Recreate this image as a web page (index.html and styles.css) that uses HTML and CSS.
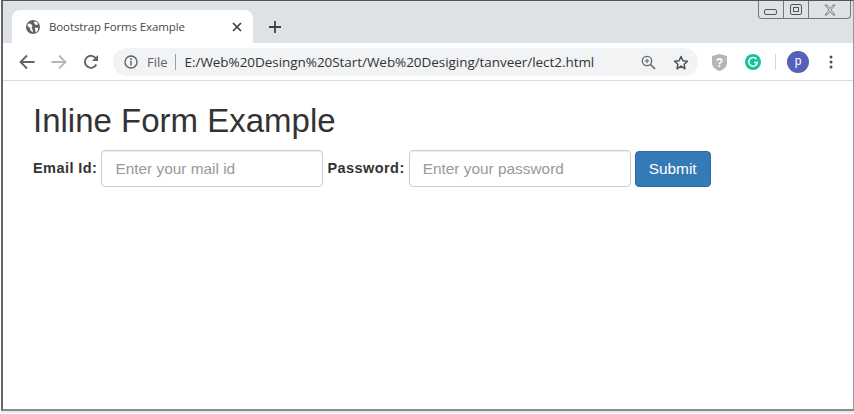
FILE: index.html
```html
<!DOCTYPE html>
<html lang="en">
<head>
<meta charset="utf-8">
<title>Bootstrap Forms Example</title>
<link rel="stylesheet" href="styles.css">
</head>
<body>
<div class="window">
  <div class="winctl">
    <div class="winbtn min"><svg width="18" height="16" viewBox="0 0 18 16"><rect x="2.5" y="7.5" width="12" height="5" rx="1.5" fill="none" stroke="#555"/></svg></div>
    <div class="winbtn max"><svg width="14" height="16" viewBox="0 0 14 16"><rect x="1.5" y="2.5" width="11" height="10" rx="1.5" fill="none" stroke="#555"/><rect x="4.5" y="5.5" width="5" height="4" fill="none" stroke="#555"/></svg></div>
    <div class="winbtn cls"><svg width="14" height="14" viewBox="0 0 14 14"><path d="M2 2h2l3 3.500 3-3.500h2l-4 5 4 5h-2l-3-3.500-3 3.500h-2l4-5z" fill="none" stroke="#666" stroke-width=".8"/></svg></div>
  </div>
  <header class="tabstrip">
    <div class="tab">
      <svg class="globe" width="14" height="14" viewBox="0 0 14 14"><circle cx="7" cy="7" r="7" fill="#5f6368"/><path d="M2 3.500l3 .5 1.500 2-1 1.500 1 2 .5 3-2.500-2-.5-2.500-2.500-2zM8 1.500l3 .5 1 2.500-2 .5-1.500-1zM9 7.500l3.500.5-1 3-2 1.500z" fill="#fff"/></svg>
      <span class="tabtitle">Bootstrap Forms Example</span>
      <svg class="tabx" width="10" height="10" viewBox="0 0 10 10"><path d="M1 1l8 8M9 1l-8 8" stroke="#3c4043" stroke-width="1.700"/></svg>
    </div>
    <svg class="newtab" width="12" height="12" viewBox="0 0 12 12"><path d="M6 0v12M0 6h12" stroke="#3c4043" stroke-width="1.800"/></svg>
  </header>
  <nav class="toolbar">
    <svg class="navbtn" width="16" height="16" viewBox="0 0 16 16"><path d="M15.500 8H2M8 1.500L1.500 8 8 14.500" fill="none" stroke="#5f6368" stroke-width="1.800"/></svg>
    <svg class="navbtn" width="16" height="16" viewBox="0 0 16 16"><path d="M.5 8H14M8 1.500L14.500 8 8 14.500" fill="none" stroke="#b4b7bb" stroke-width="1.800"/></svg>
    <svg class="navbtn" width="16" height="16" viewBox="0 0 16 16"><path d="M13.300 10.500A6 6 0 1 1 13 4.600" fill="none" stroke="#5f6368" stroke-width="1.900"/><path d="M15 1v6H9z" fill="#5f6368"/></svg>
    <div class="omnibox">
      <svg class="info" width="14" height="14" viewBox="0 0 14 14"><circle cx="7" cy="7" r="6" fill="none" stroke="#5f6368" stroke-width="1.400"/><path d="M7 6v4.500" stroke="#5f6368" stroke-width="1.500"/><circle cx="7" cy="4.200" r="1" fill="#5f6368"/></svg>
      <span class="scheme">File</span>
      <span class="urlsep"></span>
      <span class="url">E:/Web%20Desingn%20Start/Web%20Desiging/tanveer/lect2.html</span>
      <svg class="zoomi" width="15" height="15" viewBox="0 0 15 15"><circle cx="6" cy="6" r="4.700" fill="none" stroke="#5f6368" stroke-width="1.300"/><path d="M9.500 9.500l4.500 4.500" stroke="#5f6368" stroke-width="1.600"/><path d="M6 3.800v4.400M3.800 6h4.400" stroke="#5f6368" stroke-width="1.100"/></svg>
      <svg class="star" width="16" height="15" viewBox="0 0 16 15"><path d="M8 1.500l1.900 4.200 4.600.5-3.400 3.100.9 4.500L8 11.100l-4 2.700.9-4.500L1.500 6.200l4.600-.5z" fill="none" stroke="#4d5156" stroke-width="1.500" stroke-linejoin="round"/></svg>
    </div>
    <svg class="ext-shield" width="15" height="17" viewBox="0 0 15 17"><path d="M7.500 0L15 2v7c0 4-3.500 6.500-7.500 8C3.500 15.500 0 13 0 9V2z" fill="#b3b5b8"/><text x="7.500" y="12.500" class="shieldq">?</text></svg>
    <svg class="ext-g" width="16" height="16" viewBox="0 0 16 16"><circle cx="8" cy="8" r="8" fill="#15c39a"/><path d="M11.500 5.300A4.300 4.300 0 1 0 12.300 8.500H9" fill="none" stroke="#fff" stroke-width="1.500"/></svg>
    <span class="toolsep"></span>
    <div class="avatar">p</div>
    <svg class="kebab" width="4" height="14" viewBox="0 0 4 14"><circle cx="2" cy="2" r="1.500" fill="#4d5156"/><circle cx="2" cy="7" r="1.500" fill="#4d5156"/><circle cx="2" cy="12" r="1.500" fill="#4d5156"/></svg>
  </nav>
  <main class="page">
    <h2 class="title">Inline Form Example</h2>
    <form class="form-inline">
      <label class="lbl" for="email">Email Id:</label>
      <input class="field" id="email" type="text" placeholder="Enter your mail id">
      <label class="lbl" for="pwd">Password:</label>
      <input class="field" id="pwd" type="password" placeholder="Enter your password">
      <button class="submit" type="button">Submit</button>
    </form>
  </main>
</div>
</body>
</html>
```
FILE: styles.css
```css
* { box-sizing: border-box; }
html, body { margin: 0; padding: 0; }
body { width: 854px; height: 414px; background: #fff; overflow: hidden; font-family: "Liberation Sans", Arial, sans-serif; }
.window {
  position: relative;
  width: 853px;
  height: 411px;
  margin-left: 1px;
  border: 1px solid #666;
  border-top-color: #555;
  border-left-width: 2px;
  border-right-color: #999;
  border-bottom: 2px solid #8a8a8a;
  box-shadow: 0 2px 0 #e8e8e8;
  display: flex;
  flex-direction: column;
  background: #fff;
}
.winctl {
  position: absolute;
  top: 0;
  right: 2px;
  width: 93px;
  height: 18px;
  display: flex;
  border: 1px solid #777;
  border-top: none;
  border-radius: 0 0 4px 4px;
  background: #dee1e6;
}
.winbtn { display: flex; align-items: center; justify-content: center; height: 100%; }
.winbtn svg { display: block; }
.min { width: 25px; border-right: 1px solid #777; }
.max { width: 25px; border-right: 1px solid #777; }
.cls { flex: 1; }
.tabstrip {
  height: 42px;
  flex: none;
  background: #dee1e6;
  padding: 9px 0 0 9px;
  display: flex;
  align-items: flex-start;
}
.tab {
  width: 241px;
  height: 33px;
  background: #fff;
  border-radius: 8px 8px 0 0;
  display: flex;
  align-items: center;
  padding: 0 11px 0 14px;
}
.globe { flex: none; }
.tabtitle { margin-left: 9px; flex: 1; font-family: "Open Sans", "Noto Sans", sans-serif; font-size: 11.5px; color: #45494e; white-space: nowrap; letter-spacing: -.12px; }
.tabx { flex: none; }
.newtab { margin: 11px 0 0 16px; }
.toolbar {
  height: 38px;
  flex: none;
  background: #fff;
  border-bottom: 1px solid #d9dadc;
  display: flex;
  align-items: center;
  padding: 1px 0 0 16px;
}
.navbtn { flex: none; margin-right: 16px; }
.navbtn:nth-child(3) { margin-right: 14px; }
.omnibox {
  width: 585px;
  height: 28px;
  background: #f1f3f4;
  border-radius: 14px;
  display: flex;
  align-items: center;
  padding: 0 9px 0 11px;
  flex: none;
}
.info { flex: none; }
.scheme { margin-left: 9px; font-family: "Open Sans", "Noto Sans", sans-serif; font-size: 13px; color: #5f6368; }
.urlsep { width: 1px; height: 16px; background: #9aa0a6; margin: 0 9px 0 7px; }
.url { flex: 1; font-family: "Open Sans", "Noto Sans", sans-serif; font-size: 13.5px; color: #303438; white-space: nowrap; letter-spacing: -.05px; }
.zoomi { flex: none; margin-right: 17px; }
.star { flex: none; }
.ext-shield { flex: none; margin-left: 14px; }
.shieldq { font-family: "Liberation Sans", sans-serif; font-size: 12px; font-weight: 700; fill: #fff; text-anchor: middle; }
.ext-g { flex: none; margin-left: 18px; }
.toolsep { width: 1px; height: 16px; background: #d3d5d8; margin: 0 11px 0 14px; }
.avatar {
  width: 22px;
  height: 22px;
  border-radius: 50%;
  background: #5561b8;
  color: #fff;
  font-size: 12px;
  line-height: 21px;
  text-align: center;
  flex: none;
}
.kebab { flex: none; margin-left: 20px; }
.page { flex: 1; padding: 0 0 0 30px; }
.title { margin: 20px 0 9px; font-size: 33px; font-weight: 400; line-height: 40px; color: #333; }
.form-inline { display: flex; align-items: center; gap: 4px; }
.lbl { font-size: 14.5px; font-weight: 700; color: #333; margin-top: -2px; letter-spacing: .44px; }
.field {
  width: 222px;
  height: 37px;
  border: 1px solid #ccc;
  border-radius: 4px;
  padding: 0 13px;
  font-family: "Liberation Sans", Arial, sans-serif;
  font-size: 15.4px;
  color: #555;
  background: #fff;
  box-shadow: inset 0 1px 1px rgba(0,0,0,.075);
  outline: none;
}
.field::placeholder { color: #999; opacity: 1; }
.submit {
  width: 76px;
  height: 36px;
  margin-top: 1px;
  border: 1px solid #2e6da4;
  border-radius: 4px;
  background: #337ab7;
  color: #fff;
  font-family: "Liberation Sans", Arial, sans-serif;
  font-size: 15.4px;
  padding: 0;
}
```
